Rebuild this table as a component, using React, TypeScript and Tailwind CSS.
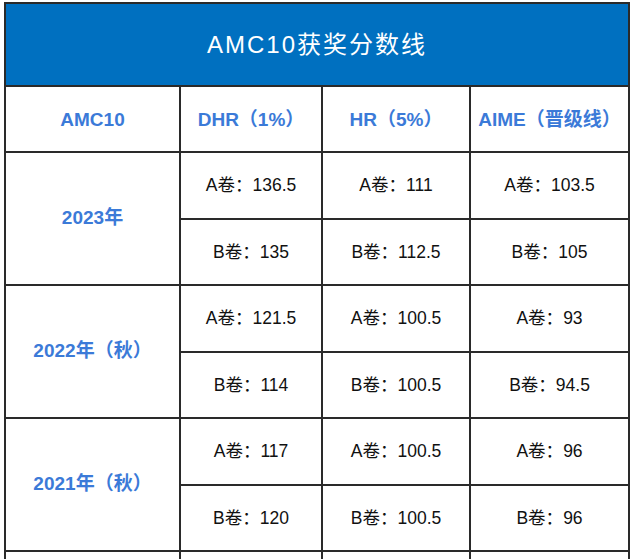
import React from 'react'

// ─── Data ─────────────────────────────────────────────────────────────────────

interface YearRow {
  year: string
  a:    [string, string, string]
  b:    [string, string, string]
}

const ROWS: YearRow[] = [
  { year: '2023年',       a: ['136.5', '111', '103.5'],   b: ['135', '112.5', '105'] },
  { year: '2022年（秋）', a: ['121.5', '100.5', '93'],    b: ['114', '100.5', '94.5'] },
  { year: '2021年（秋）', a: ['117', '100.5', '96'],      b: ['120', '100.5', '96'] },
]

const HEADERS = ['AMC10', 'DHR（1%）', 'HR（5%）', 'AIME（晋级线）']

const FONT = { fontFamily: '"Liberation Sans", "Noto Sans CJK SC", sans-serif' }

const cell = 'border-2 border-[#2a2a2a] text-center align-middle p-0'

// ─── Component ────────────────────────────────────────────────────────────────

export default function App() {
  return (
    <div className="h-[559px] w-[633px] overflow-hidden bg-white pl-[4px] pt-[2px]" style={FONT}>
      <table className="table-fixed border-collapse w-[624px]">
        <colgroup>
          <col className="w-[175px]" />
          <col className="w-[142px]" />
          <col className="w-[148px]" />
          <col className="w-[159px]" />
        </colgroup>
        <tbody>
          {/* Title */}
          <tr className="h-[83px]">
            <td colSpan={4} className={`${cell} bg-[#0070c0] text-white text-[24px] tracking-[2px]`}>
              AMC10获奖分数线
            </td>
          </tr>

          {/* Column headers */}
          <tr className="h-[66px]">
            {HEADERS.map(h => (
              <td key={h} className={`${cell} text-[#3b7ad8] text-[19px] font-bold pt-[3px]`}>
                {h}
              </td>
            ))}
          </tr>

          {/* Scores */}
          {ROWS.map(r => (
            <React.Fragment key={r.year}>
              <tr className="h-[67px]">
                <td rowSpan={2} className={`${cell} text-[#3b7ad8] text-[19px] font-bold`}>
                  {r.year}
                </td>
                {r.a.map((v, i) => (
                  <td key={i} className={`${cell} text-[17.5px] text-[#111]`}>A卷：{v}</td>
                ))}
              </tr>
              <tr className="h-[66px]">
                {r.b.map((v, i) => (
                  <td key={i} className={`${cell} text-[17.5px] text-[#111]`}>B卷：{v}</td>
                ))}
              </tr>
            </React.Fragment>
          ))}

          {/* Next year, cut off by the window */}
          <tr className="h-[66px]">
            <td className={cell} />
            <td className={cell} />
            <td className={cell} />
            <td className={cell} />
          </tr>
        </tbody>
      </table>
    </div>
  )
}
